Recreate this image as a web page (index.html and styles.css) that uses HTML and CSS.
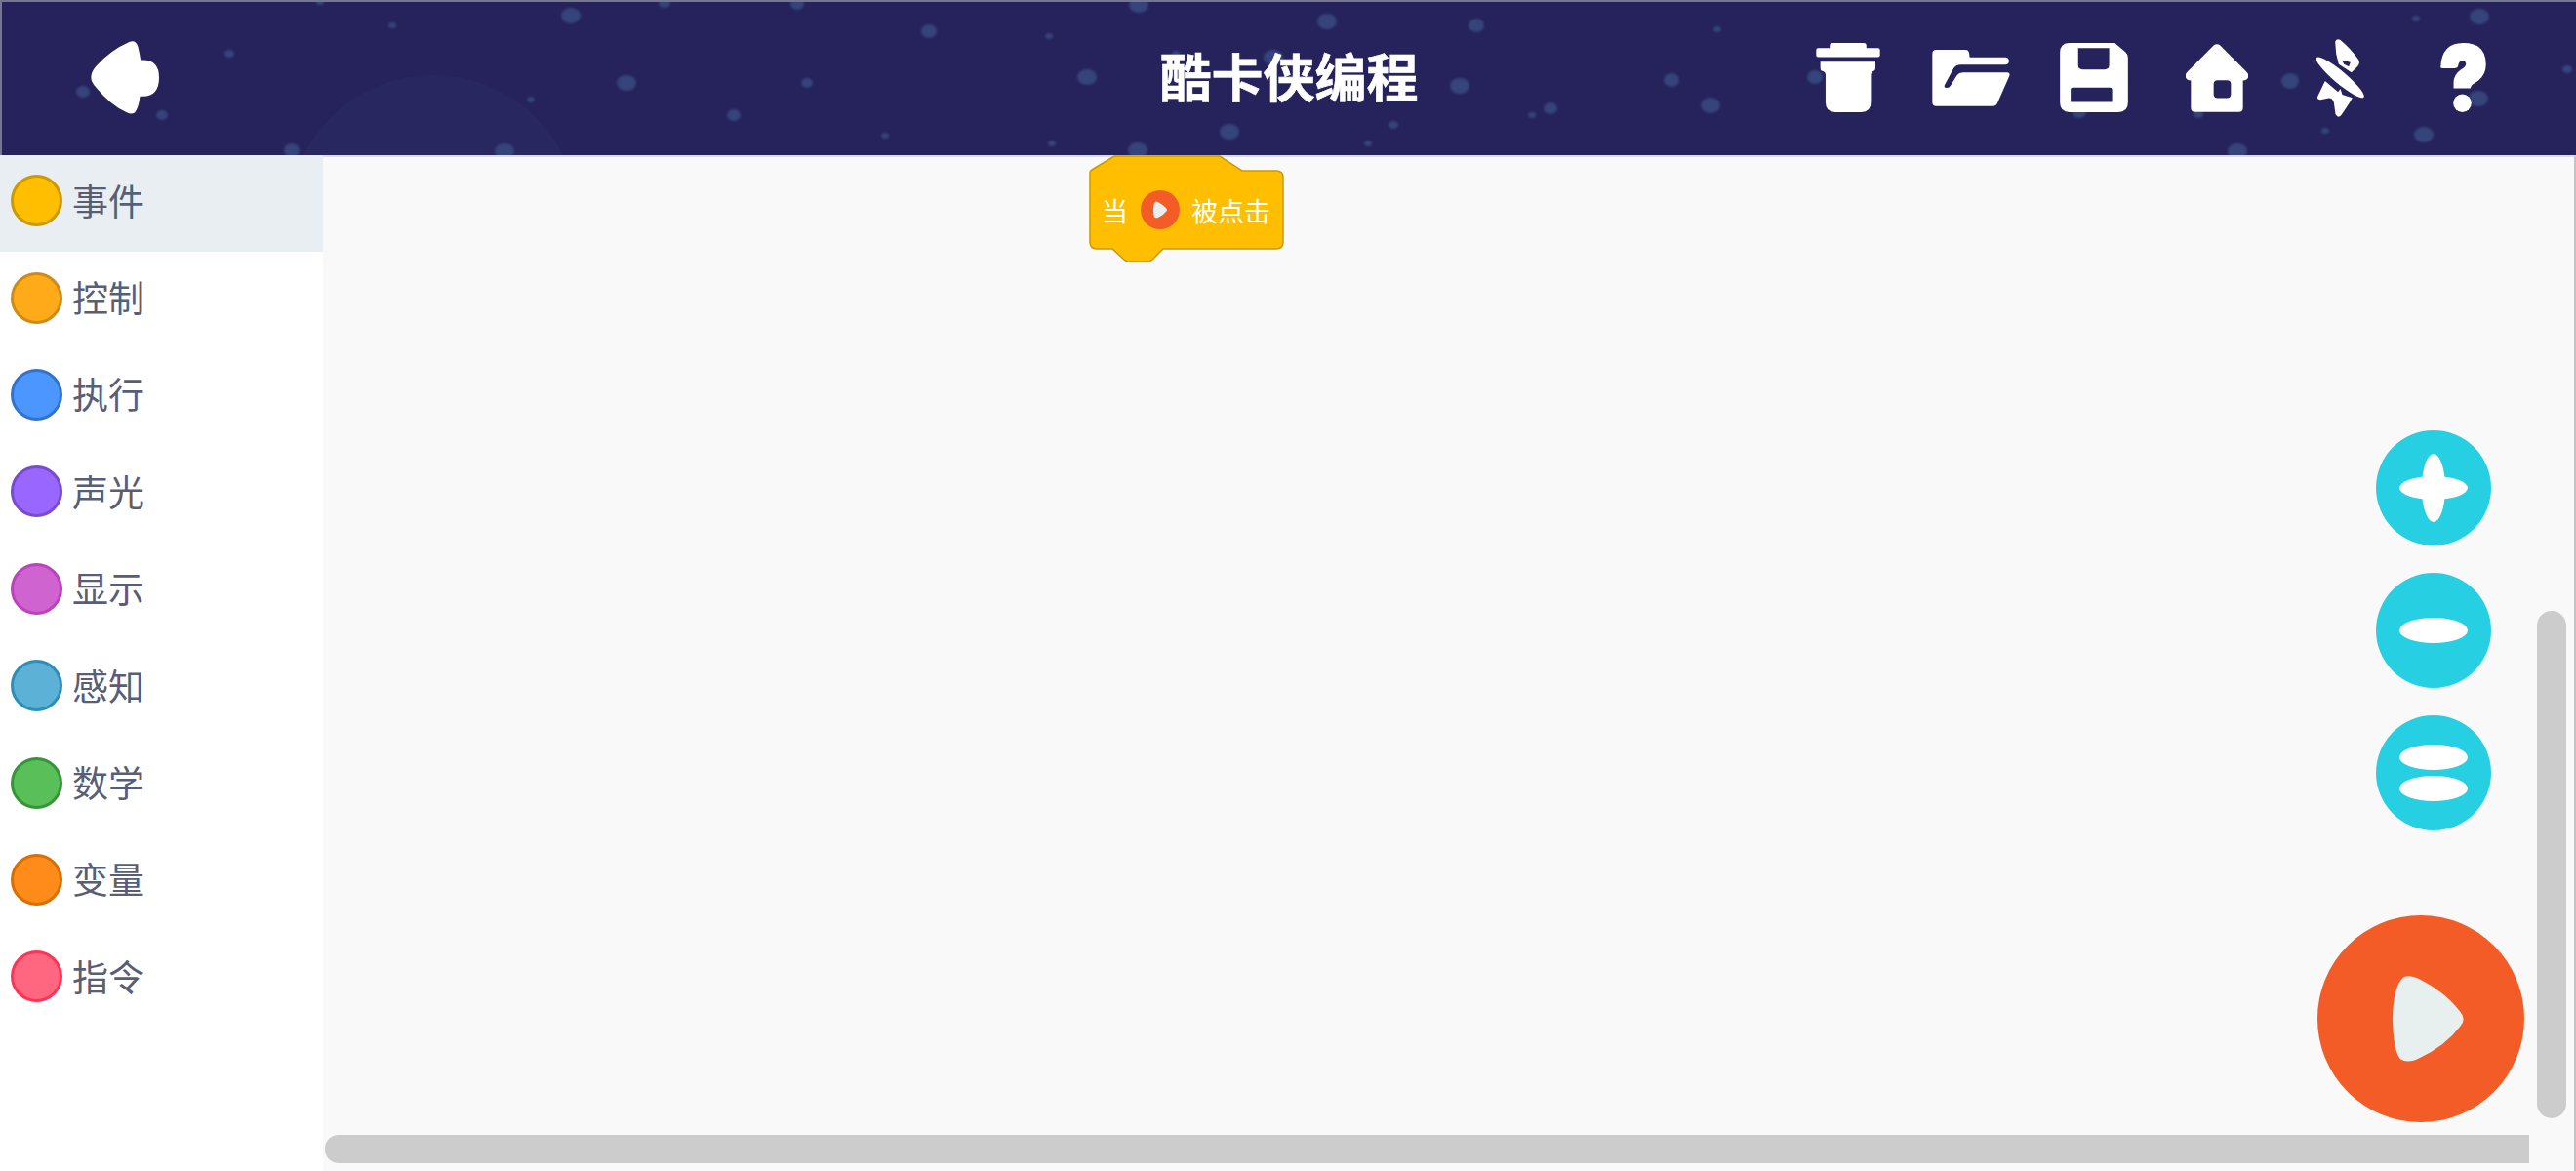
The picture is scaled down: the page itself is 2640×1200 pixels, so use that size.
FILE: index.html
```html
<!DOCTYPE html>
<html lang="zh-CN">
<head>
  <meta charset="UTF-8" />
  <title>酷卡侠编程</title>
  <link rel="stylesheet" href="styles.css">
</head>
<body>
  <div class="header">
    <!-- background speckles -->
    <svg class="header-bg" viewBox="0 0 2640 159">
      <circle class="hill" cx="444" cy="226" r="149"/>
      <g class="dots">
        <ellipse cx="328" cy="2" rx="4" ry="3"/><ellipse cx="585" cy="16" rx="10" ry="8"/><ellipse cx="402" cy="26" rx="4" ry="3"/>
        <ellipse cx="681" cy="3" rx="6" ry="5"/><ellipse cx="817" cy="4" rx="7" ry="6"/><ellipse cx="1167" cy="5" rx="10" ry="8"/>
        <ellipse cx="952" cy="32" rx="8" ry="7"/><ellipse cx="1075" cy="37" rx="4" ry="3"/><ellipse cx="235" cy="55" rx="5" ry="4"/>
        <ellipse cx="642" cy="85" rx="10" ry="8"/><ellipse cx="827" cy="85" rx="6" ry="5"/><ellipse cx="544" cy="102" rx="4" ry="3"/>
        <ellipse cx="85" cy="94" rx="7" ry="6"/><ellipse cx="166" cy="118" rx="6" ry="5"/><ellipse cx="752" cy="118" rx="7" ry="6"/>
        <ellipse cx="1114" cy="79" rx="10" ry="8"/><ellipse cx="1260" cy="135" rx="10" ry="8"/><ellipse cx="907" cy="139" rx="4" ry="3"/>
        <ellipse cx="1078" cy="147" rx="4" ry="3"/><ellipse cx="299" cy="154" rx="8" ry="7"/><ellipse cx="517" cy="155" rx="10" ry="8"/>
        <ellipse cx="1166" cy="154" rx="10" ry="8"/><ellipse cx="1205" cy="55" rx="4" ry="3"/><ellipse cx="1305" cy="59" rx="10" ry="8"/>
        <ellipse cx="1360" cy="22" rx="10" ry="8"/><ellipse cx="1513" cy="26" rx="8" ry="7"/><ellipse cx="1760" cy="30" rx="4" ry="3"/>
        <ellipse cx="1713" cy="82" rx="8" ry="7"/><ellipse cx="1496" cy="88" rx="10" ry="8"/><ellipse cx="1589" cy="111" rx="7" ry="6"/>
        <ellipse cx="1570" cy="118" rx="4" ry="3"/><ellipse cx="1753" cy="108" rx="10" ry="8"/><ellipse cx="1428" cy="128" rx="5" ry="4"/>
        <ellipse cx="1402" cy="147" rx="4" ry="3"/><ellipse cx="2541" cy="17" rx="10" ry="8"/><ellipse cx="2476" cy="19" rx="4" ry="3"/>
        <ellipse cx="1860" cy="79" rx="8" ry="7"/><ellipse cx="2347" cy="83" rx="9" ry="8"/><ellipse cx="2540" cy="101" rx="10" ry="8"/>
        <ellipse cx="2631" cy="71" rx="5" ry="4"/><ellipse cx="2484" cy="138" rx="10" ry="8"/><ellipse cx="2383" cy="134" rx="4" ry="3"/>
        <ellipse cx="2293" cy="155" rx="10" ry="8"/><ellipse cx="2131" cy="115" rx="7" ry="6"/><ellipse cx="2253" cy="117" rx="5" ry="4"/>
      </g>
    </svg>

    <div class="header-left">
      <div class="tool">
        <svg width="71" height="75" viewBox="276 128 214 224"><path d="M398 130 Q418 122 425 145 Q430 165 433 186 H440 Q490 186 490 240 Q490 298 440 298 H431 Q428 325 420 340 Q412 358 390 348 Q340 325 295 270 Q265 240 295 205 Q340 155 398 130 Z"/></svg>
      </div>
    </div>

    <div class="title">酷卡侠编程</div>

    <div class="header-right">
      <div class="tool">
        <svg width="66" height="71" viewBox="33 42 197 214">
          <path d="M75 58 V50 Q75 42 83 42 H180 Q188 42 188 50 V58 H224 Q230 58 230 64 V80 Q230 86 224 86 H39 Q33 86 33 80 V64 Q33 58 39 58 Z"/>
          <path d="M46 100 H216 V120 Q216 128 208 130 Q202 132 202 140 V226 Q202 256 172 256 H92 Q62 256 62 226 V140 Q62 132 56 130 Q46 128 46 120 Z"/>
        </svg>
      </div>
      <div class="tool">
        <svg width="80" height="58" viewBox="390 62 238 174"><path d="M402 62 H492 Q501 62 503 72 L505 85 H614 A11.5 11.5 0 0 1 614 108 H478 Q462 108 455 120 L428 170 Q424 179 435 179 Q442 179 446 172 L466 140 Q472 132 484 132 H620 Q630 132 627 142 L590 226 Q586 235 576 235 H402 Q390 235 390 223 V74 Q390 62 402 62 Z"/></svg>
      </div>
      <div class="tool">
        <svg width="70" height="71" viewBox="783 42 210 214"><path fill-rule="evenodd" d="M813 42 H952 L985 70 Q993 77 993 88 V226 Q993 256 963 256 H813 Q783 256 783 226 V72 Q783 42 813 42 Z M839 58 V110 Q839 124 853 124 H921 Q935 124 935 110 V58 Z M822 180 Q816 180 816 186 V224 H944 V186 Q944 180 938 180 Z"/></svg>
      </div>
      <div class="tool">
        <svg width="64" height="70" viewBox="44 44 192 209"><path fill-rule="evenodd" d="M130 48 Q140 40 150 48 L230 128 Q240 138 236 147 Q232 156 220 156 V240 Q220 253 207 253 H73 Q60 253 60 240 V156 Q48 156 44 147 Q40 138 50 128 Z M142 155 Q130 155 130 167 V198 Q130 210 142 210 H171 Q183 210 183 198 V167 Q183 155 171 155 Z"/></svg>
      </div>
      <div class="tool">
        <svg width="49" height="80" viewBox="446 27 146 240">
          <path fill-rule="evenodd" d="M503 35 Q506 24 518 29 Q550 55 573 88 Q582 100 572 111 L553 130 L514 104 L506 72 Z M524 92 L550 98 L545 112 L530 104 Z"/>
          <path d="M450 202 L472 156 L512 190 L519 180 L525 198 L556 208 Q545 228 521 262 Q512 272 504 258 L499 222 Q494 206 480 209 L458 214 Q444 212 450 202 Z"/>
          <ellipse cx="518" cy="145" rx="95" ry="19" transform="rotate(40 518 145)"/>
        </svg>
      </div>
      <div class="tool">
        <svg width="47" height="71" viewBox="828 42 140 214">
          <path d="M828 118 Q830 42 898 42 Q968 42 968 108 Q968 145 935 165 Q922 172 920 182 H868 V165 Q868 140 890 125 Q908 115 906 105 Q904 95 895 97 Q885 97 882 112 Q881 120 870 120 H836 Q828 120 828 118 Z"/>
          <circle cx="895" cy="228" r="28"/>
        </svg>
      </div>
    </div>
  </div>

  <div class="main">
    <!-- Category list -->
    <div class="sidebar">
      <div class="cat active"><span class="dot c-event"></span><span class="cat-name">事件</span></div>
      <div class="cat"><span class="dot c-control"></span><span class="cat-name">控制</span></div>
      <div class="cat"><span class="dot c-run"></span><span class="cat-name">执行</span></div>
      <div class="cat"><span class="dot c-sound"></span><span class="cat-name">声光</span></div>
      <div class="cat"><span class="dot c-show"></span><span class="cat-name">显示</span></div>
      <div class="cat"><span class="dot c-sense"></span><span class="cat-name">感知</span></div>
      <div class="cat"><span class="dot c-math"></span><span class="cat-name">数学</span></div>
      <div class="cat"><span class="dot c-var"></span><span class="cat-name">变量</span></div>
      <div class="cat"><span class="dot c-cmd"></span><span class="cat-name">指令</span></div>
    </div>

    <!-- Block workspace -->
    <div class="workspace">
      <div class="block">
        <svg class="block-shape" width="200" height="111" viewBox="0 0 200 111">
          <path d="M1 18 Q1 16 3 15 L26 1 H134 L157 16 H192 Q199 16 199 23 V89 Q199 96 192 96 H76 L65 107 Q63 109 60 109 H41 Q38 109 36 107 L24 96 H8 Q1 96 1 89 Z"/>
        </svg>
        <div class="block-row">
          <span>当</span>
          <span class="flag">
            <svg width="14" height="18" viewBox="338 300 218 263"><path d="M372 304 Q390 295 420 310 Q500 350 545 410 Q565 432 545 455 Q500 515 420 552 Q385 570 362 555 Q340 530 338 430 Q340 330 372 304 Z"/></svg>
          </span>
          <span>被点击</span>
        </div>
      </div>

      <div class="zoom-tools">
        <div class="zoom-btn">
          <svg width="70" height="70" viewBox="0 0 70 70"><ellipse cx="35" cy="35" rx="35" ry="12"/><ellipse cx="35" cy="35" rx="12" ry="35"/><circle cx="35" cy="35" r="15"/></svg>
        </div>
        <div class="zoom-btn">
          <svg width="70" height="70" viewBox="0 0 70 70"><ellipse cx="35" cy="35" rx="35" ry="13"/></svg>
        </div>
        <div class="zoom-btn">
          <svg width="70" height="70" viewBox="0 0 70 70"><ellipse cx="35" cy="19" rx="35" ry="13"/><ellipse cx="35" cy="51" rx="35" ry="13"/></svg>
        </div>
      </div>

      <div class="run-btn">
        <svg width="73" height="88" viewBox="338 300 218 263"><path d="M372 304 Q390 295 420 310 Q500 350 545 410 Q565 432 545 455 Q500 515 420 552 Q385 570 362 555 Q340 530 338 430 Q340 330 372 304 Z"/></svg>
      </div>

      <div class="scroll-v"></div>
      <div class="scroll-h"></div>
    </div>
  </div>
</body>
</html>
```

FILE: styles.css
```css
body {
  margin: 0;
  height: 1200px;
  overflow: hidden;
  font-family: "Noto Sans CJK SC", "Noto Sans", sans-serif;
  background-color: #f9f9f9;
}

.header {
  position: relative;
  box-sizing: border-box;
  height: 159px;
  padding-bottom: 2px;
  display: grid;
  grid-template-columns: 1fr auto 1fr;
  align-items: center;
  overflow: hidden;
  background-color: #26235c;
  border-top: 2px solid #77768f;
  border-left: 2px solid #77768f;
}

.header-bg {
  position: absolute;
  left: -2px;
  top: -2px;
  width: 2640px;
  height: 159px;
}

.hill {
  fill: #292760;
}

.dots {
  fill: #35447b;
  filter: blur(0.8px);
}

.header-left,
.header-right {
  position: relative;
  display: flex;
}

.header-left {
  padding-left: 62px;
}

.header-right {
  justify-content: flex-end;
  padding-right: 53px;
}

.tool {
  width: 126px;
  display: flex;
  justify-content: center;
  align-items: center;
}

.tool svg {
  fill: white;
}

.title {
  position: relative;
  top: -3px;
  color: white;
  font-size: 53px;
  font-weight: bold;
  line-height: 60px;
  -webkit-text-stroke: 0.6px white;
}

.main {
  display: flex;
  height: 1041px;
}

.sidebar {
  width: 331px;
  flex-shrink: 0;
  background-color: white;
}

.cat {
  box-sizing: border-box;
  height: 99.4px;
  padding: 0 0 6px 11px;
  display: flex;
  align-items: center;
  gap: 10px;
  font-size: 37px;
  color: #575e75;
}

.cat-name {
  position: relative;
  top: -1px;
}

.cat.active {
  background-color: #e9eef2;
}

.dot {
  box-sizing: border-box;
  width: 53px;
  height: 53px;
  border-radius: 50%;
  border: 3px solid;
}

.c-event { background: #ffbf00; border-color: #cc9900; }
.c-control { background: #ffab19; border-color: #cf8b17; }
.c-run { background: #4c97ff; border-color: #3373cc; }
.c-sound { background: #9966ff; border-color: #774dcb; }
.c-show { background: #cf63cf; border-color: #bd42bd; }
.c-sense { background: #5cb1d6; border-color: #2e8eb8; }
.c-math { background: #59c059; border-color: #389438; }
.c-var { background: #ff8c1a; border-color: #db6e00; }
.c-cmd { background: #ff6680; border-color: #ff3355; }

.workspace {
  position: relative;
  flex: 1;
  background-color: #f9f9f9;
  border-top: 2px solid #dcdce6;
  border-right: 2px solid #c4c4c4;
}

/* block sits on the canvas, its hat runs up to the header */
.block {
  position: absolute;
  left: 785px;
  top: -2px;
  width: 200px;
  height: 111px;
}

.block-shape {
  position: absolute;
  left: 0;
  top: 0;
  fill: #ffbf00;
  stroke: #cc9900;
  stroke-width: 1.5;
}

.block-row {
  position: relative;
  height: 80px;
  margin-top: 16px;
  padding-left: 13px;
  display: flex;
  align-items: center;
  gap: 12.5px;
  font-size: 27px;
  color: white;
}

.flag {
  width: 40px;
  height: 40px;
  border-radius: 50%;
  background-color: #f35c26;
  display: flex;
  align-items: center;
  justify-content: center;
}

.flag svg {
  fill: #e8f0ef;
}

.zoom-tools {
  position: absolute;
  right: 85px;
  top: 280px;
  display: flex;
  flex-direction: column;
  gap: 28px;
}

.zoom-btn {
  width: 118px;
  height: 118px;
  border-radius: 50%;
  background-color: #27cfe2;
  display: flex;
  align-items: center;
  justify-content: center;
}

.zoom-btn svg {
  fill: white;
}

.run-btn {
  position: absolute;
  right: 51px;
  top: 777px;
  box-sizing: border-box;
  width: 212px;
  height: 212px;
  padding-left: 15px;
  border-radius: 50%;
  background-color: #f35c26;
  display: flex;
  align-items: center;
  justify-content: center;
}

.run-btn svg {
  fill: #e8f0ef;
}

.scroll-v {
  position: absolute;
  right: 8px;
  top: 465px;
  width: 30px;
  height: 520px;
  border-radius: 15px;
  background-color: #cccccc;
}

.scroll-h {
  position: absolute;
  left: 2px;
  top: 1002px;
  width: 2259px;
  height: 29px;
  border-radius: 14px 0 0 14px;
  background-color: #cccccc;
}
```
